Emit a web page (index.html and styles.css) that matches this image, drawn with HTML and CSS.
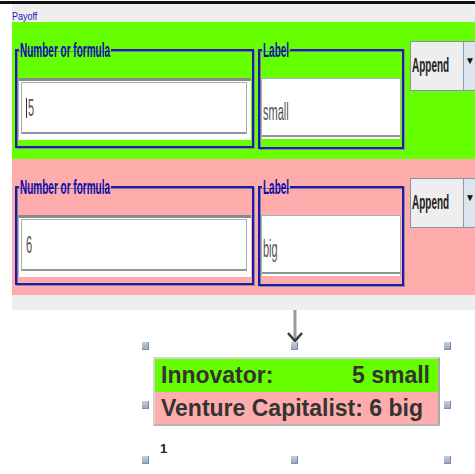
FILE: index.html
```html
<!DOCTYPE html>
<html lang="en">
<head>
    <meta charset="UTF-8">
    <title>Payoff editor</title>
    <link rel="stylesheet" href="styles.css">
</head>
<body>
    <div class="topline"></div>
    <div class="panel">
        <div class="title-bar"><span class="title-text">Payoff</span></div>

        <div class="row row-green">
            <fieldset class="group group-number">
                <legend><span class="tall">Number or formula</span></legend>
                <div class="field">
                    <div class="field-box"><span class="caret"></span><span class="tall value">5</span></div>
                </div>
            </fieldset>
            <fieldset class="group group-label">
                <legend><span class="tall">Label</span></legend>
                <div class="field field-label">
                    <div class="field-box"><span class="tall value">small</span></div>
                </div>
            </fieldset>
            <div class="append">
                <div class="append-text"><span class="tall">Append</span></div>
                <div class="append-arrow">&#9660;</div>
            </div>
        </div>

        <div class="row row-pink">
            <fieldset class="group group-number">
                <legend><span class="tall">Number or formula</span></legend>
                <div class="field">
                    <div class="field-box"><span class="tall value">6</span></div>
                </div>
            </fieldset>
            <fieldset class="group group-label">
                <legend><span class="tall">Label</span></legend>
                <div class="field field-label">
                    <div class="field-box"><span class="tall value">big</span></div>
                </div>
            </fieldset>
            <div class="append">
                <div class="append-text"><span class="tall">Append</span></div>
                <div class="append-arrow">&#9660;</div>
            </div>
        </div>

        <div class="footer-bar"></div>
    </div>

    <!-- Preview of the resulting payoff node -->
    <div class="canvas">
        <svg class="arrow" width="20" height="34" viewBox="0 0 20 34">
            <line x1="10" y1="0" x2="10" y2="30" stroke="#9a9a9a" stroke-width="3"/>
            <polyline points="3,23 10,31 17,23" fill="none" stroke="#3a3a3a" stroke-width="2.5"/>
        </svg>

        <div class="node">
            <div class="node-row node-green"><span>Innovator:</span><span>5 small</span></div>
            <div class="node-row node-pink"><span>Venture Capitalist: 6 big</span></div>
        </div>

        <span class="handle h-top h-left"></span>
        <span class="handle h-top h-mid"></span>
        <span class="handle h-top h-right"></span>
        <span class="handle h-middle h-left"></span>
        <span class="handle h-middle h-right"></span>
        <span class="handle h-bottom h-left"></span>
        <span class="handle h-bottom h-mid"></span>
        <span class="handle h-bottom h-right"></span>

        <span class="node-index">1</span>
    </div>
</body>
</html>
```

FILE: styles.css
```css
body {
    margin: 0;
    overflow: hidden;
    background: #ffffff;
    font-family: "Liberation Sans", Arial, sans-serif;
    width: 475px;
    height: 474px;
}

.topline {
    margin-top: 1px;
    height: 3px;
    background: #111111;
}

.panel {
    margin-left: 12px;
    overflow: hidden;
}

/* Title strip with the "Payoff" caption */
.title-bar {
    height: 18px;
    background: #eeeeee;
}

.title-text {
    display: inline-block;
    font-size: 9px;
    line-height: 10px;
    color: #2020c8;
    transform: scaleY(1.3);
    transform-origin: top left;
}

/* Stretched Java-like text */
.tall {
    display: inline-block;
    font-size: 10px;
    line-height: 12px;
    transform: scaleY(2.1);
}

.row {
    display: flex;
    align-items: flex-start;
    padding-top: 19px;
    padding-left: 3px;
    box-sizing: border-box;
}

.row-green {
    height: 137px;
    background: #66ff00;
}

.row-pink {
    height: 136px;
    background: #ffacac;
}

.group {
    flex-shrink: 0;
    margin: 2px 0 0 0;
    padding: 21px 1px 6px 1px;
    border: 2px solid #1c1ca6;
    box-shadow: inset 1px 1px 0 #7a7a9a, 1px 1px 0 #8a8aa8;
    box-sizing: border-box;
    min-width: 0;
}

.group legend {
    padding: 0 1px;
    margin-left: 1px;
    line-height: 12px;
    color: #0c0caa;
    font-weight: bold;
}

.group-number {
    width: 239px;
}

.group-label {
    width: 146px;
    margin-left: 4px;
    padding-bottom: 8px;
}

.field {
    height: 62px;
    background: #ffffff;
    border-top: 3px solid #8a8a8a;
    border-left: 1px solid #b4b4b4;
    padding: 1px 4px 6px 2px;
    box-sizing: border-box;
}

.field-label {
    height: 61px;
    border-top: 1px solid #a8b0b8;
    border-left: 1px solid #a8b0b8;
    border-right: 1px solid #a8b0b8;
    padding: 0 0 2px 0;
}

.field-box {
    height: 100%;
    display: flex;
    align-items: center;
    padding-left: 4px;
    border: 1px solid #a6aeb6;
    border-bottom: 2px solid #8c969e;
    box-sizing: border-box;
}

.field-label .field-box {
    border-top: none;
    border-left: none;
    border-right: none;
    padding-left: 1px;
    padding-top: 10px;
}

.value {
    font-size: 11px;
    color: #555555;
}

.caret {
    width: 1px;
    height: 20px;
    background: #333333;
    margin-right: 1px;
}

/* Append combo button */
.append {
    display: flex;
    flex-shrink: 0;
    width: 70px;
    height: 50px;
    margin-left: 6px;
    border: 1px solid #8494a8;
    background: #eeeeee;
    box-sizing: border-box;
}

.append-text {
    width: 53px;
    flex-shrink: 0;
    display: flex;
    align-items: center;
    padding-left: 1px;
    border-right: 1px solid #8a9bb0;
    box-sizing: border-box;
    font-weight: bold;
    color: #222222;
}

.append-arrow {
    flex: 1;
    padding-top: 13px;
    padding-left: 1px;
    background: #dce4ee;
    font-size: 10px;
    color: #111111;
}

.footer-bar {
    height: 15px;
    background: #eeeeee;
}

/* Diagram canvas below the editor */
.canvas {
    position: relative;
    height: 164px;
}

.arrow {
    position: absolute;
    left: 285px;
    top: 0;
}

.node {
    position: absolute;
    left: 153px;
    top: 47px;
    width: 287px;
    border: 2px solid #d4d4d4;
    border-right-color: #a8a8a8;
    border-bottom-color: #b4b4b4;
    box-sizing: border-box;
}

.node-row {
    display: flex;
    justify-content: space-between;
    height: 33px;
    padding: 0 8px 0 6px;
    font-size: 23px;
    font-weight: bold;
    line-height: 33px;
    color: #333333;
    white-space: nowrap;
}

.node-green {
    background: #66ff00;
}

.node-pink {
    height: 32px;
    background: #ffacac;
}

.handle {
    position: absolute;
    width: 6px;
    height: 7px;
    background: linear-gradient(#c4d0e0, #9aaac0);
    border-right: 1px solid #7888a0;
    border-bottom: 1px solid #8090a8;
}

.h-top { top: 32px; }
.h-middle { top: 91px; }
.h-bottom { top: 146px; }
.h-left { left: 142px; }
.h-mid { left: 291px; }
.h-right { left: 444px; }

.node-index {
    position: absolute;
    left: 160px;
    top: 131px;
    font-size: 13px;
    font-weight: bold;
    color: #222222;
}
```
